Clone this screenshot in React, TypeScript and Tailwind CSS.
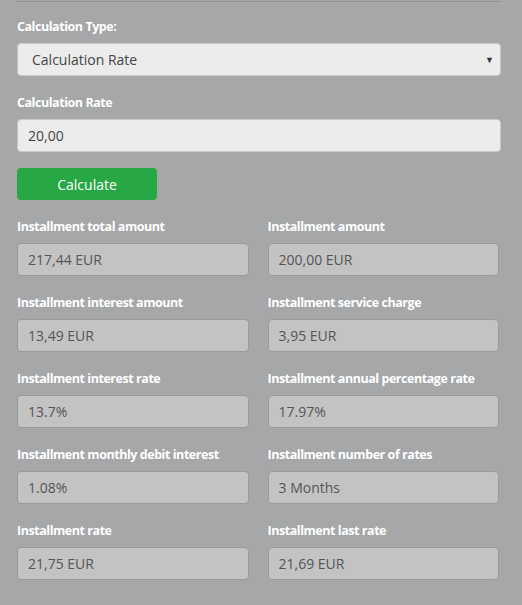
import React from "react";

const fields: [string, string][] = [
  ["Installment total amount", "217,44 EUR"],
  ["Installment amount", "200,00 EUR"],
  ["Installment interest amount", "13,49 EUR"],
  ["Installment service charge", "3,95 EUR"],
  ["Installment interest rate", "13.7%"],
  ["Installment annual percentage rate", "17.97%"],
  ["Installment monthly debit interest", "1.08%"],
  ["Installment number of rates", "3 Months"],
  ["Installment rate", "21,75 EUR"],
  ["Installment last rate", "21,69 EUR"],
];

const Label: React.FC<{ children: React.ReactNode }> = ({ children }) => (
  <div className="text-[12.5px] font-bold leading-[20px] text-white mb-[6px] tracking-[-0.45px]">{children}</div>
);

export default function App() {
  return (
    <div
      className="w-[522px] h-[605px] bg-[#a6a7a9] pl-[17px] pr-[21px] overflow-hidden"
      style={{ fontFamily: '"Open Sans", "Noto Sans", sans-serif' }}
    >
      <div className="h-[2px] border-t border-[#8e8f91] mt-[1px] mb-[14px]" />

      <Label>Calculation Type:</Label>
      <div className="h-[33px] rounded-[4px] bg-[#ececec] border border-[#c8c8c8] flex items-center justify-between pl-[14px] pr-[6px] text-[14px] text-[#444] mb-[17px]">
        <span>Calculation Rate</span>
        <span className="text-[9px] text-[#333]">▼</span>
      </div>

      <Label>Calculation Rate</Label>
      <div className="h-[33px] rounded-[4px] bg-[#ececec] border border-[#c8c8c8] flex items-center pl-[10px] text-[14px] text-[#444] mb-[16px]">
        20,00
      </div>

      <button className="w-[140px] h-[32px] rounded-[4px] bg-[#28a745] text-white text-[14px] mb-[17px] block">
        Calculate
      </button>

      <div className="grid grid-cols-2 gap-x-[19px] pr-[2px]">
        {fields.map(([label, value]) => (
          <div key={label} className="mb-[17px]">
            <Label>{label}</Label>
            <div className="h-[33px] rounded-[4px] bg-[#c3c3c3] border border-[#9a9a9a] flex items-center pl-[10px] text-[14px] text-[#555]">
              {value}
            </div>
          </div>
        ))}
      </div>
    </div>
  );
}
